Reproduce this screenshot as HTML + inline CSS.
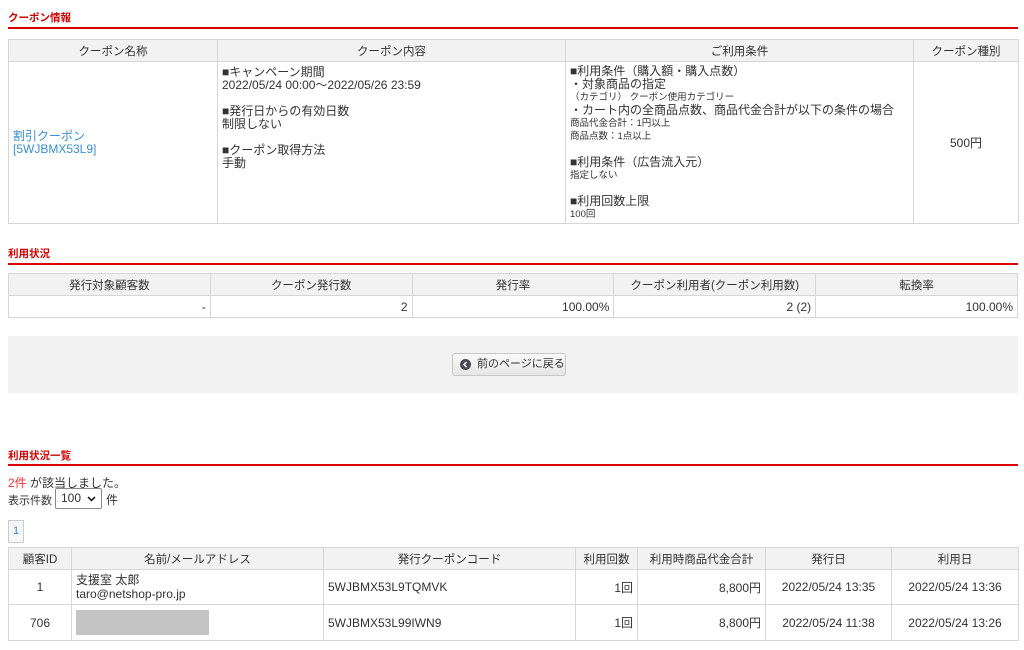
<!DOCTYPE html>
<html><head><meta charset="utf-8"><style>
*{box-sizing:border-box;margin:0;padding:0}
body{width:1024px;height:650px;background:#fff;font-family:"Liberation Sans","Noto Sans CJK JP",sans-serif;font-size:12px;color:#333;position:relative;overflow:hidden}
.abs{position:absolute}
.h{position:absolute;left:8px;font-size:10.5px;font-weight:bold;color:#c00}
.line{position:absolute;left:8px;width:1010px;height:2px;background:#d00}
table{position:absolute;left:8px;width:1010px;border-collapse:collapse;table-layout:fixed}
th,td{border:1px solid #d6d6d6;font-weight:normal}
th{background:#f2f2f2;height:22px;text-align:center;color:#333;font-size:11.5px}
td{padding:0 4px}
.r{text-align:right}.c{text-align:center}
.s{font-size:9.5px}
.bx{height:161px;overflow:hidden;padding-top:4px}
.bx div{height:13px;line-height:13px;white-space:nowrap}
a{color:#3a8fd0;text-decoration:none}
</style></head><body>
<div class="h" style="top:10px">クーポン情報</div>
<div class="line" style="top:27px"></div>
<table style="top:39px">
<colgroup><col style="width:209px"><col style="width:348px"><col style="width:348px"><col style="width:105px"></colgroup>
<tr><th>クーポン名称</th><th>クーポン内容</th><th>ご利用条件</th><th>クーポン種別</th></tr>
<tr><td><a style="line-height:13px;display:block">割引クーポン<br>[5WJBMX53L9]</a></td>
<td style="vertical-align:top"><div class="bx"><div>■キャンペーン期間</div><div>2022/05/24 00:00～2022/05/26 23:59</div><div></div><div>■発行日からの有効日数</div><div>制限しない</div><div></div><div>■クーポン取得方法</div><div>手動</div></div></td>
<td style="vertical-align:top"><div class="bx" style="padding-top:3px"><div>■利用条件（購入額・購入点数）</div><div>・対象商品の指定</div><div class="s">（カテゴリ） クーポン使用カテゴリー</div><div>・カート内の全商品点数、商品代金合計が以下の条件の場合</div><div class="s">商品代金合計：1円以上</div><div class="s">商品点数：1点以上</div><div></div><div>■利用条件（広告流入元）</div><div class="s">指定しない</div><div></div><div>■利用回数上限</div><div class="s">100回</div></div></td>
<td class="c">500円</td></tr>
</table>

<div class="h" style="top:246px">利用状況</div>
<div class="line" style="top:263px"></div>
<table style="top:273px">
<tr><th>発行対象顧客数</th><th>クーポン発行数</th><th>発行率</th><th>クーポン利用者(クーポン利用数)</th><th>転換率</th></tr>
<tr style="height:22px"><td class="r">-</td><td class="r">2</td><td class="r">100.00%</td><td class="r">2 (2)</td><td class="r">100.00%</td></tr>
</table>

<div class="abs" style="left:8px;top:336px;width:1010px;height:57px;background:#f2f2f2"></div>
<div class="abs" style="left:452px;top:353px;width:114px;height:23px;border:1px solid #c8c8c8;border-radius:3px;background:linear-gradient(#fafafa,#e6e6e6);font-size:11px;line-height:21px;padding-left:24px;color:#333">前のページに戻る
<span class="abs" style="left:7px;top:5px;width:11px;height:11px;border-radius:50%;background:#4a4a55"><svg width="11" height="11" style="position:absolute;left:0;top:0"><path d="M6.5 3 L4 5.5 L6.5 8" stroke="#fff" stroke-width="1.5" fill="none"/></svg></span></div>

<div class="h" style="top:448px">利用状況一覧</div>
<div class="line" style="top:464px"></div>
<div class="abs" style="left:8px;top:474px"><span style="color:#e33">2件</span> が該当しました。</div>
<div class="abs" style="left:8px;top:492px;font-size:11px">表示件数</div>
<div class="abs" style="left:55px;top:488px;width:47px;height:21px;border:1px solid #888;border-radius:2px;padding-left:5px;line-height:19px">100<svg width="9" height="6" style="position:absolute;right:5px;top:7px"><path d="M1 1 L4.5 4.5 L8 1" stroke="#222" stroke-width="1.6" fill="none"/></svg></div>
<div class="abs" style="left:106px;top:491px">件</div>
<div class="abs" style="left:8px;top:520px;width:16px;height:23px;border:1px solid #ccc;background:#f6f6f6;color:#3a8fd0;text-align:center;line-height:21px;font-size:11px">1</div>

<table style="top:547px">
<colgroup><col style="width:63px"><col style="width:252px"><col style="width:252px"><col style="width:62px"><col style="width:128px"><col style="width:126px"><col style="width:127px"></colgroup>
<tr><th>顧客ID</th><th>名前/メールアドレス</th><th>発行クーポンコード</th><th>利用回数</th><th>利用時商品代金合計</th><th>発行日</th><th>利用日</th></tr>
<tr style="height:35px"><td class="c">1</td><td style="line-height:14px">支援室 太郎<br>taro@netshop-pro.jp</td><td>5WJBMX53L9TQMVK</td><td class="r">1回</td><td class="r">8,800円</td><td class="c">2022/05/24 13:35</td><td class="c">2022/05/24 13:36</td></tr>
<tr style="height:36px"><td class="c">706</td><td><div style="width:133px;height:25px;background:#c4c4c4"></div></td><td>5WJBMX53L99IWN9</td><td class="r">1回</td><td class="r">8,800円</td><td class="c">2022/05/24 11:38</td><td class="c">2022/05/24 13:26</td></tr>
</table>
</body></html>
